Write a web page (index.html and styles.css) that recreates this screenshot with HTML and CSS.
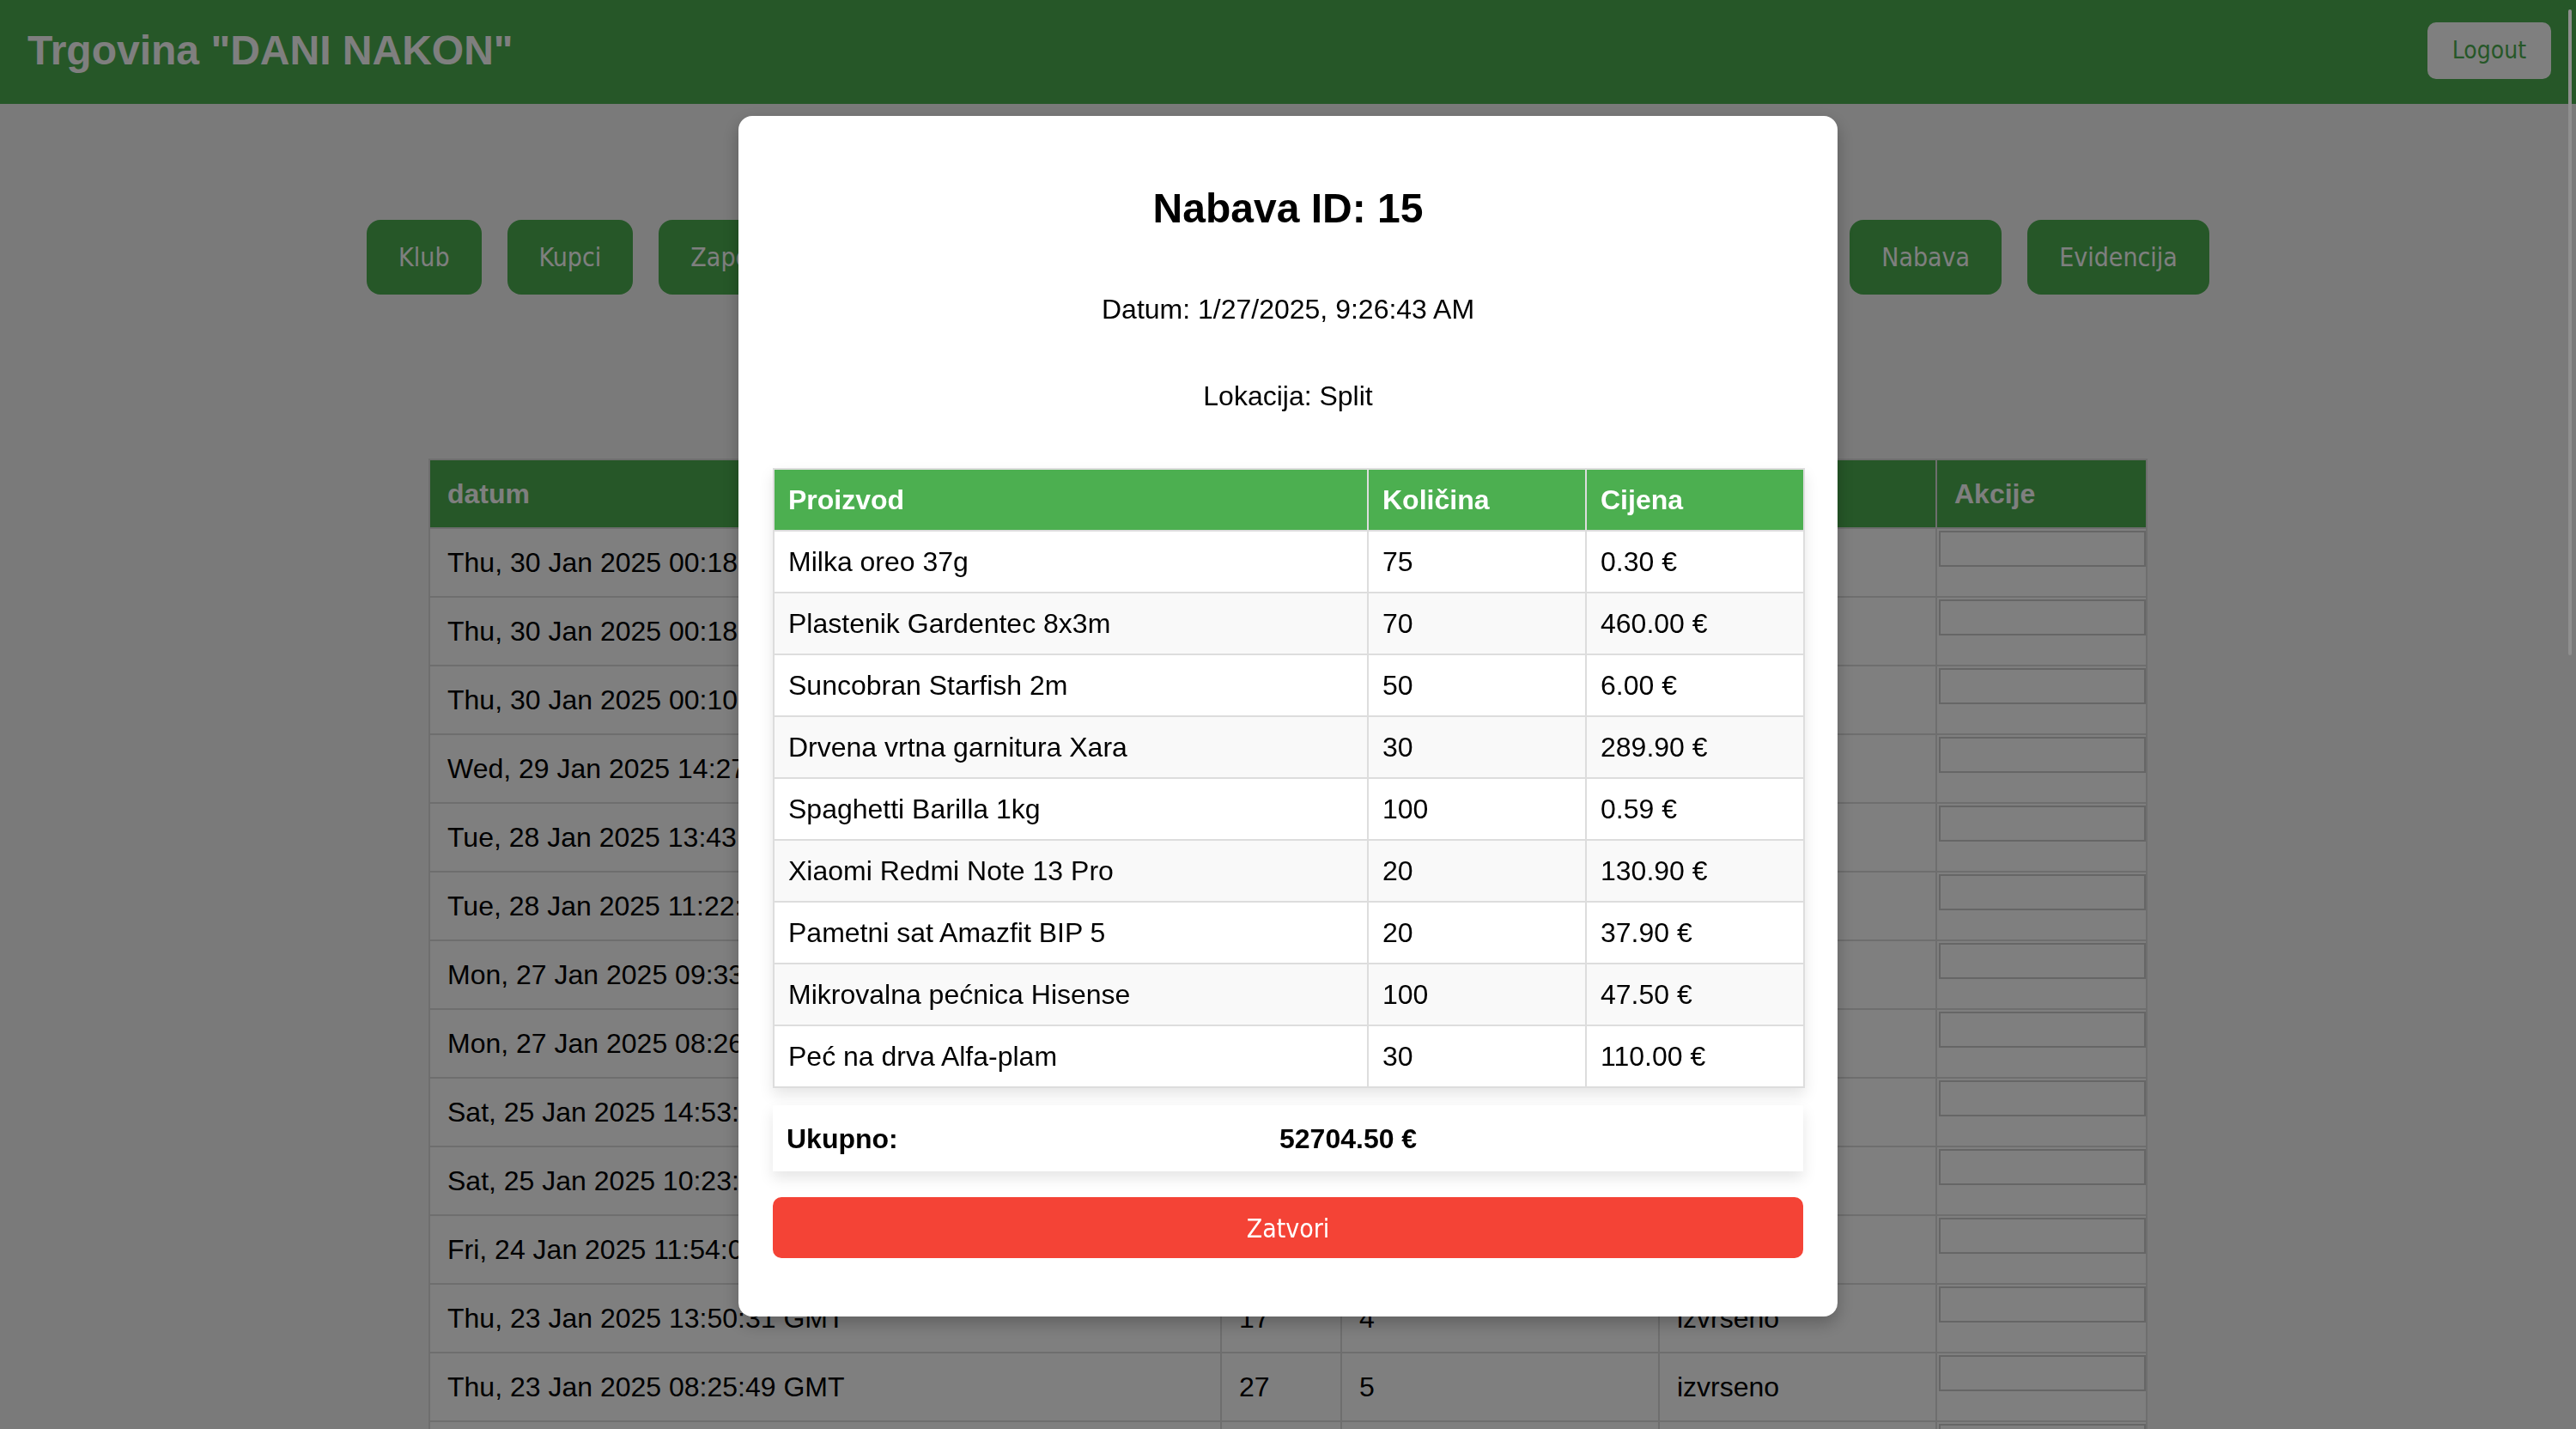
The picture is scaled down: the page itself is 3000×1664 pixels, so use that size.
FILE: index.html
```html
<!DOCTYPE html>
<html lang="hr">
<head>
<meta charset="utf-8">
<title>Trgovina "DANI NAKON"</title>
<link rel="stylesheet" href="styles.css">
</head>
<body>
<header class="topbar">
  <h1 class="brand">Trgovina "DANI NAKON"</h1>
  <button class="logout">Logout</button>
</header>

<main class="content">
  <nav class="menu">
    <button class="menu-btn">Klub</button>
    <button class="menu-btn">Kupci</button>
    <button class="menu-btn">Zaposlenici</button>
    <button class="menu-btn">Proizvodi</button>
    <button class="menu-btn">Kategorije</button>
    <button class="menu-btn">Dobavljači</button>
    <button class="menu-btn">Lokacije</button>
    <button class="menu-btn">Prodaja</button>
    <button class="menu-btn">Nabava</button>
    <button class="menu-btn">Evidencija</button>
  </nav>

  <table class="records">
    <colgroup>
      <col class="c-date"><col class="c-id"><col class="c-loc"><col class="c-status"><col class="c-act">
    </colgroup>
    <thead>
      <tr><th>datum</th><th>id</th><th>lokacija</th><th>status</th><th>Akcije</th></tr>
    </thead>
    <tbody>
      <tr><td>Thu, 30 Jan 2025 00:18:52 GMT</td><td>38</td><td>1</td><td>izvrseno</td><td class="actions"><span class="act-box"></span></td></tr>
      <tr><td>Thu, 30 Jan 2025 00:18:10 GMT</td><td>37</td><td>2</td><td>izvrseno</td><td class="actions"><span class="act-box"></span></td></tr>
      <tr><td>Thu, 30 Jan 2025 00:10:37 GMT</td><td>36</td><td>1</td><td>izvrseno</td><td class="actions"><span class="act-box"></span></td></tr>
      <tr><td>Wed, 29 Jan 2025 14:27:15 GMT</td><td>35</td><td>3</td><td>izvrseno</td><td class="actions"><span class="act-box"></span></td></tr>
      <tr><td>Tue, 28 Jan 2025 13:43:08 GMT</td><td>33</td><td>2</td><td>izvrseno</td><td class="actions"><span class="act-box"></span></td></tr>
      <tr><td>Tue, 28 Jan 2025 11:22:41 GMT</td><td>31</td><td>4</td><td>izvrseno</td><td class="actions"><span class="act-box"></span></td></tr>
      <tr><td>Mon, 27 Jan 2025 09:33:19 GMT</td><td>16</td><td>1</td><td>izvrseno</td><td class="actions"><span class="act-box"></span></td></tr>
      <tr><td>Mon, 27 Jan 2025 08:26:43 GMT</td><td>15</td><td>3</td><td>izvrseno</td><td class="actions"><span class="act-box"></span></td></tr>
      <tr><td>Sat, 25 Jan 2025 14:53:27 GMT</td><td>29</td><td>2</td><td>izvrseno</td><td class="actions"><span class="act-box"></span></td></tr>
      <tr><td>Sat, 25 Jan 2025 10:23:56 GMT</td><td>28</td><td>5</td><td>izvrseno</td><td class="actions"><span class="act-box"></span></td></tr>
      <tr><td>Fri, 24 Jan 2025 11:54:02 GMT</td><td>18</td><td>1</td><td>izvrseno</td><td class="actions"><span class="act-box"></span></td></tr>
      <tr><td>Thu, 23 Jan 2025 13:50:31 GMT</td><td>17</td><td>4</td><td>izvrseno</td><td class="actions"><span class="act-box"></span></td></tr>
      <tr><td>Thu, 23 Jan 2025 08:25:49 GMT</td><td>27</td><td>5</td><td>izvrseno</td><td class="actions"><span class="act-box"></span></td></tr>
      <tr><td>Wed, 22 Jan 2025 16:12:05 GMT</td><td>14</td><td>2</td><td>izvrseno</td><td class="actions"><span class="act-box"></span></td></tr>
    </tbody>
  </table>
</main>

<div class="overlay">
  <div class="modal">
    <h2 class="modal-title">Nabava ID: 15</h2>
    <p class="modal-line">Datum: 1/27/2025, 9:26:43 AM</p>
    <p class="modal-line modal-line-last">Lokacija: Split</p>
    <table class="items">
      <colgroup><col class="i-name"><col class="i-qty"><col class="i-price"></colgroup>
      <thead>
        <tr><th>Proizvod</th><th>Količina</th><th>Cijena</th></tr>
      </thead>
      <tbody>
        <tr><td>Milka oreo 37g</td><td>75</td><td>0.30 €</td></tr>
        <tr><td>Plastenik Gardentec 8x3m</td><td>70</td><td>460.00 €</td></tr>
        <tr><td>Suncobran Starfish 2m</td><td>50</td><td>6.00 €</td></tr>
        <tr><td>Drvena vrtna garnitura Xara</td><td>30</td><td>289.90 €</td></tr>
        <tr><td>Spaghetti Barilla 1kg</td><td>100</td><td>0.59 €</td></tr>
        <tr><td>Xiaomi Redmi Note 13 Pro</td><td>20</td><td>130.90 €</td></tr>
        <tr><td>Pametni sat Amazfit BIP 5</td><td>20</td><td>37.90 €</td></tr>
        <tr><td>Mikrovalna pećnica Hisense</td><td>100</td><td>47.50 €</td></tr>
        <tr><td>Peć na drva Alfa-plam</td><td>30</td><td>110.00 €</td></tr>
      </tbody>
    </table>
    <div class="total">
      <strong class="total-label">Ukupno:</strong>
      <strong class="total-value">52704.50 €</strong>
    </div>
    <button class="close-btn">Zatvori</button>
  </div>
</div>

<div class="scroll-thumb"></div>
</body>
</html>
```

FILE: styles.css
```css
html, body {
  margin: 0;
  padding: 0;
  overflow: hidden;
}

body {
  background: #f4f4f4;
  font-family: "Liberation Sans", Arial, sans-serif;
  font-size: 32px;
  color: #000;
}

/* ---------- top bar ---------- */
.topbar {
  height: 121px;
  box-sizing: border-box;
  background: #4CAF50;
  display: flex;
  align-items: center;
  justify-content: space-between;
  padding: 0 29px 0 32px;
}

.brand {
  margin: 0 0 4px;
  font-size: 48px;
  line-height: 55px;
  font-weight: bold;
  color: #fff;
}

.logout {
  background: #fff;
  color: #4CAF50;
  border: none;
  border-radius: 10px;
  font-family: "DejaVu Sans Condensed", "Liberation Sans", sans-serif;
  font-size: 28px;
  line-height: 34px;
  padding: 16px 29px;
  margin-bottom: 4px;
}

/* ---------- navigation ---------- */
.menu {
  display: flex;
  justify-content: center;
  gap: 30px;
  margin-top: 135px;
}

.menu-btn {
  background: #4CAF50;
  color: #fff;
  border: none;
  border-radius: 16px;
  font-family: "DejaVu Sans Condensed", "Liberation Sans", sans-serif;
  font-size: 30px;
  line-height: 39px;
  padding: 24px 37px;
}

/* ---------- main table ---------- */
.records {
  width: 2000px;
  margin: 191px auto 0;
  border-collapse: collapse;
  table-layout: fixed;
  border: 2px solid #ddd;
  background: #fff;
}

.c-date { width: 922px; }
.c-id { width: 140px; }
.c-loc { width: 370px; }
.c-status { width: 323px; }
.c-act { width: 245px; }

.records th,
.records td {
  padding: 20px;
  line-height: 38px;
  border: 2px solid #ddd;
  text-align: left;
  white-space: nowrap;
  overflow: hidden;
}

.records th {
  background: #4CAF50;
  color: #fff;
  font-weight: bold;
}

.records td.actions {
  padding: 0;
  vertical-align: top;
}

.act-box {
  display: block;
  box-sizing: border-box;
  height: 42px;
  margin: 2px 0 0 2px;
  border: 2px solid #ccc;
  background: #fff;
}

/* ---------- modal ---------- */
.overlay {
  position: fixed;
  inset: 0;
  background: rgba(0, 0, 0, 0.5);
  display: flex;
  justify-content: center;
  align-items: flex-start;
  padding-top: 135px;
}

.modal {
  width: 1280px;
  box-sizing: border-box;
  background: #fff;
  border-radius: 16px;
  padding: 40px 40px 40px;
  text-align: center;
  box-shadow: 0 8px 20px rgba(0, 0, 0, 0.25);
}

.modal-title {
  margin: 40px 0 72px;
  font-size: 48px;
  line-height: 55px;
  font-weight: bold;
}

.modal-line {
  margin: 0 0 64px;
  line-height: 37px;
}

.modal-line-last {
  margin-bottom: 65px;
}

.items {
  width: 100%;
  border-collapse: collapse;
  table-layout: fixed;
  border: 2px solid #ddd;
  text-align: left;
  box-shadow: 0 8px 16px rgba(0, 0, 0, 0.1);
}

.i-name { width: 692px; }
.i-qty { width: 254px; }
.i-price { width: 254px; }

.items th,
.items td {
  padding: 16px;
  line-height: 38px;
  border: 2px solid #ddd;
}

.items th {
  background: #4CAF50;
  color: #fff;
  font-weight: bold;
}

.items tbody tr:nth-child(even) td {
  background: #f9f9f9;
}

.total {
  display: flex;
  align-items: center;
  margin-top: 20px;
  padding: 21px 16px 19px;
  line-height: 37px;
  background: #fff;
  text-align: left;
  box-shadow: 0 8px 16px rgba(0, 0, 0, 0.1);
}

.total-label {
  width: 574px;
}

.close-btn {
  display: block;
  width: 100%;
  margin: 30px 0 28px;
  background: #f44336;
  color: #fff;
  border: none;
  border-radius: 10px;
  font-family: "DejaVu Sans Condensed", "Liberation Sans", sans-serif;
  font-size: 30px;
  line-height: 37px;
  padding: 18px 0 16px;
}

.scroll-thumb {
  position: fixed;
  top: 11px;
  right: 5px;
  width: 4px;
  height: 752px;
  border-radius: 2px;
  background: #8e8e8e;
}
```
